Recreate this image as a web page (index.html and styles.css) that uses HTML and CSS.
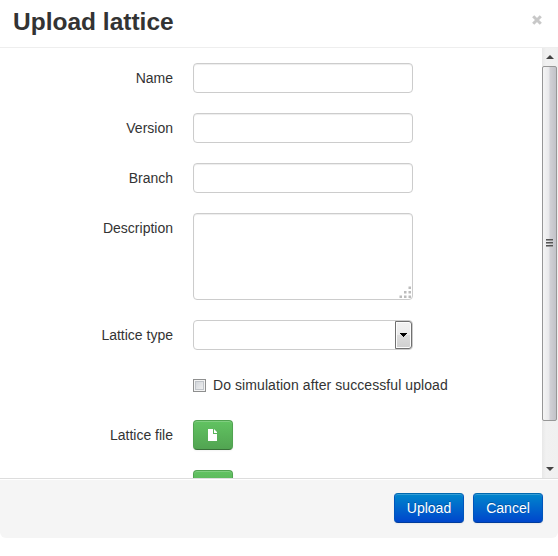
FILE: index.html
```
<!DOCTYPE html>
<html lang="en">
<head>
<meta charset="utf-8">
<title>Upload lattice</title>
<link rel="stylesheet" href="styles.css">
</head>
<body>
<div class="modal">
  <header class="modal-header">
    <h3>Upload lattice</h3>
    <button class="close" aria-label="Close"><svg width="10" height="10" viewBox="0 0 10 10"><path d="M1.2 1.2L8.8 8.8M8.8 1.2L1.2 8.8"/></svg></button>
  </header>
  <div class="modal-body">
    <form class="form">
      <div class="group"><label for="name">Name</label><input class="field" id="name" type="text"></div>
      <div class="group"><label for="version">Version</label><input class="field" id="version" type="text"></div>
      <div class="group"><label for="branch">Branch</label><input class="field" id="branch" type="text"></div>
      <div class="group"><label for="desc">Description</label>
        <div class="field area" id="desc">
          <svg class="grip" width="12" height="12" viewBox="0 0 12 12"><path d="M9.500 .5H12V3H9.500zM5 5h2.500v2.500H5zM9.500 5H12v2.500H9.500zM.5 9.500H3V12H.5zM5 9.500h2.500V12H5zM9.500 9.500H12V12H9.500z"/></svg>
        </div>
      </div>
      <div class="group"><label>Lattice type</label>
        <div class="field select"><span class="drop"><svg width="7" height="4" viewBox="0 0 7 4" shape-rendering="crispEdges"><path d="M0 0h7v1H6v1H5v1H4v1H3V3H2V2H1V1H0z"/></svg></span></div>
      </div>
      <div class="group"><span></span><div class="check-row"><span class="box"></span>Do simulation after successful upload</div></div>
      <div class="group"><label>Lattice file</label>
        <button type="button" class="btn file"><svg width="9" height="12" viewBox="0 0 9 12"><path d="M0 0h5v5h4v7H0zM6 0l3 3v1H6z"/></svg></button>
      </div>
      <div class="group"><span></span><button type="button" class="btn file"></button></div>
    </form>
    <div class="scrollbar">
      <span class="arrow"><svg width="8" height="4" viewBox="0 0 8 4"><path d="M4 0l4 4H0z"/></svg></span>
      <div class="thumb"><i></i><i></i><i></i></div>
      <span class="arrow"><svg width="8" height="4" viewBox="0 0 8 4"><path d="M0 0h8L4 4z"/></svg></span>
    </div>
  </div>
  <footer class="modal-footer">
    <button class="btn primary">Upload</button>
    <button class="btn primary">Cancel</button>
  </footer>
</div>
</body>
</html>
```
FILE: styles.css
```
* { box-sizing: border-box; }
body {
  margin: 0;
  background: #fff;
  color: #333;
  font: 14px/20px "Liberation Sans", Arial, sans-serif;
  overflow: hidden;
}
.modal { width: 558px; height: 538px; display: flex; flex-direction: column; }
.modal-header {
  height: 48px;
  flex: none;
  display: flex;
  justify-content: space-between;
  padding: 7px 15px 0 13px;
  border-bottom: 1px solid #eee;
}
h3 { margin: 0; font-size: 24.5px; line-height: 30px; }
.close { width: 10px; height: 10px; margin: 8px 1px 0 0; padding: 0; border: 0; background: none; }
.close svg { display: block; }
.close path { stroke: #c8c8c8; stroke-width: 3; fill: none; }
.modal-body { height: 430px; flex: none; display: flex; overflow: hidden; }
.form { flex: 1; padding-top: 15px; }
.group {
  display: grid;
  grid-template-columns: 173px 220px;
  column-gap: 20px;
  align-items: start;
  margin-bottom: 20px;
}
label { padding-top: 5px; text-align: right; }
.field {
  display: block;
  width: 220px;
  height: 30px;
  margin: 0;
  padding: 4px 6px;
  border: 1px solid #ccc;
  border-radius: 4px;
  background: #fff;
  box-shadow: inset 0 1px 1px rgba(0, 0, 0, .075);
  outline: 0;
}
.area { height: 87px; display: flex; justify-content: flex-end; align-items: flex-end; padding: 0 1px 1px 0; }
.grip { fill: #bcbcbc; }
.select { display: flex; justify-content: flex-end; padding: 0; box-shadow: none; }
.drop {
  width: 17px;
  height: 28px;
  display: flex;
  align-items: center;
  justify-content: center;
  border: 1px solid #707070;
  border-radius: 0 3px 3px 0;
  background: linear-gradient(#f2f2f2 0, #ebebeb 50%, #ddd 50%, #cfcfcf 100%);
  box-shadow: inset 0 0 0 1px #fcfcfc;
}
.check-row { display: flex; align-items: center; height: 30px; white-space: nowrap; letter-spacing: .08px; }
.box {
  flex: none;
  width: 13px;
  height: 13px;
  margin-right: 7px;
  border: 1px solid #8e8f8f;
  background: linear-gradient(135deg, #cbcfd5, #f6f6f6);
  box-shadow: inset 0 0 0 1px #f4f4f4, inset 0 0 0 2px #c0c4c9;
}
.btn {
  height: 30px;
  padding: 4px 12px;
  border: 1px solid;
  border-radius: 4px;
  color: #fff;
  font: 14px/20px "Liberation Sans", Arial, sans-serif;
  text-shadow: 0 -1px 0 rgba(0, 0, 0, .25);
  box-shadow: inset 0 1px 0 rgba(255, 255, 255, .2), 0 1px 2px rgba(0, 0, 0, .05);
}
.file {
  width: 40px;
  display: flex;
  align-items: center;
  justify-content: center;
  padding-right: 13px;
  border-color: #51a351 #51a351 #387038;
  background: linear-gradient(#62c462, #51a351) border-box;
}
.file svg { flex: none; fill: #fff; }
.primary {
  width: 70px;
  padding: 4px 0;
  border-color: #0069b0 #0055bb #003c9c;
  background: linear-gradient(#08c, #04c) border-box;
}
.scrollbar {
  width: 16px;
  display: flex;
  flex-direction: column;
  background: linear-gradient(90deg, #e8e8e8, #f1f1f1 4px, #f0f0f0);
}
.arrow { height: 18px; display: flex; align-items: center; justify-content: center; fill: #444; }
.thumb {
  height: 355px;
  margin-right: 1px;
  margin-bottom: 39px;
  padding-bottom: 1px;
  display: flex;
  flex-direction: column;
  align-items: center;
  justify-content: center;
  gap: 1px;
  border: 1px solid #979797;
  border-radius: 2px;
  background: linear-gradient(90deg, #f5f5f5, #e9e9eb 45%, #d0d0d5 55%, #c2c2c8);
}
.thumb i { width: 7px; height: 2px; border-top: 1px solid #555; background: #999; }
.modal-footer {
  height: 60px;
  flex: none;
  display: flex;
  justify-content: flex-end;
  gap: 9px;
  padding: 14px 15px 0;
  border-top: 1px solid #ddd;
  border-radius: 0 0 6px 6px;
  background: #f5f5f5;
  box-shadow: inset 0 1px 0 #fff;
}
```
